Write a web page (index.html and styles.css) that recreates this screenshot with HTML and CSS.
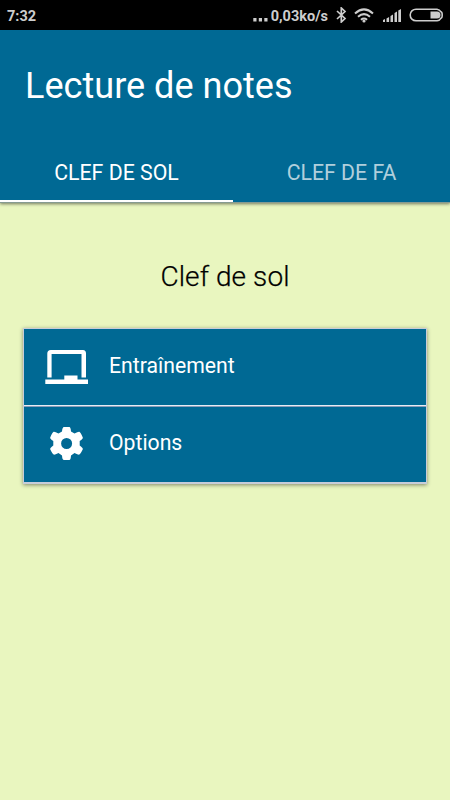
FILE: index.html
```html
<!DOCTYPE html>
<html lang="fr">
<head>
<meta charset="utf-8">
<title>Lecture de notes</title>
<link rel="stylesheet" href="styles.css">
</head>
<body>
<div class="status">
  <span class="time">7:32</span>
  <div class="indicators">
    <svg class="dots" width="15" height="4" viewBox="0 0 15 4"><path d="M.3 0h3.200v3.400H.3zM5.800 0H9v3.400H5.800zM11.300 0h3.200v3.400h-3.200z"/></svg>
    <span class="speed">0,03ko/s</span>
    <svg class="bluetooth" width="11" height="16" viewBox="0 0 11 16"><path d="M1 4l8 7.500L5.300 15V1L9 4.500 1 12"/></svg>
    <svg class="wifi" width="20" height="15" viewBox="0 0 20 15"><path d="M1 5.400Q10-2.600 19 5.400M4 8.700q6-5.200 12 0M6.900 11.700q3.100-2.400 6.200 0"/><circle cx="10" cy="13" r="1.600"/></svg>
    <svg class="signal" width="20" height="14" viewBox="0 0 20 14"><path d="M1 13v-2l2-1v3zM4.500 13V9.500l2.600-1.500v5zM8.500 13V7L11 5.500V13zM12.500 13V4L15 2.500V13zM16.300 13V1.500L19 0v13z"/></svg>
    <svg class="battery" width="35" height="14" viewBox="0 0 35 14"><path class="shell" d="M7 1.200h21a5 5 0 0 1 3.800 2.500q1.400 0 1.400 3.300t-1.400 3.300A5 5 0 0 1 28 12.800H7A5.800 5.800 0 0 1 7 1.200z"/><path d="M21.500 3.500H28a3.500 3.500 0 0 1 0 7h-6.500z"/></svg>
  </div>
</div>
<header class="header">
  <h1>Lecture de notes</h1>
  <nav class="tabs">
    <div class="tab active"><span>CLEF DE SOL</span></div>
    <div class="tab"><span>CLEF DE FA</span></div>
  </nav>
</header>
<main>
  <h2>Clef de sol</h2>
  <div class="menu">
    <div class="row">
      <svg class="icon" width="44" height="36" viewBox="0 0 44 36"><path d="M2.300 28.500V4.500Q2.300 1 5.800 1H38Q41 1 41 4.500v24H36.500V5H6.600v23.500zM.3 30.500H19.300V26.500H32.500v4H43v4.500H.3z"/></svg>
      <span>Entraînement</span>
    </div>
    <div class="row">
      <svg class="icon" width="44" height="36" viewBox="0 0 44 36"><path fill-rule="evenodd" d="M17 5.500Q17.300 1 19 1h5.300q1.400 0 1.700 4.500l3.500 2q3.700-2 4.800-1.700 1.100.4 3.500 5.600.4 1.200-3.100 3.700v4.500q3.500 2.500 3.100 3.700-2.300 5-3.500 5.300-1.100.3-4.800-1.500L26 29.400Q25.700 34 24.300 34H19q-1.700 0-2-4.600l-3.500-2.300q-3.700 1.800-4.800 1.500-1.200-.3-3.500-5.300-.4-1.200 3.100-3.700v-4.500q-3.500-2.500-3.100-3.700 2.400-5.200 3.500-5.600 1.100-.3 4.800 1.700zM21.600 12a5.500 5.500 0 1 0 0 11 5.500 5.500 0 0 0 0-11z"/></svg>
      <span>Options</span>
    </div>
  </div>
</main>
</body>
</html>
```
FILE: styles.css
```css
* { box-sizing: border-box; }
body {
  margin: 0;
  height: 800px;
  overflow: hidden;
  background: #e9f6bf;
  font-family: Roboto, "Liberation Sans", sans-serif;
}
.status {
  display: flex;
  align-items: center;
  justify-content: space-between;
  height: 30px;
  padding: 1px 6px 0 7px;
  background: #000;
  color: #cdcdcd;
  font-size: 14.5px;
  font-weight: 700;
  line-height: 30px;
}
.status svg { fill: #cdcdcd; }
.time { padding-top: 2px; }
.indicators { display: flex; align-items: center; }
.speed { padding-top: 2px; }
.dots { margin: 8px 3px 0 0; }
.bluetooth { margin: 0 0 2px 8px; }
.status .bluetooth { fill: none; stroke: #cdcdcd; stroke-width: 1.7; }
.wifi { margin: 0 0 1px 7px; overflow: visible; stroke: #cdcdcd; stroke-width: 2; }
.wifi path { fill: none; }
.wifi circle { stroke: none; }
.signal { margin-left: 8px; }
.battery { margin: 0 0 2px 7px; }
.battery .shell { fill: none; stroke: #cdcdcd; stroke-width: 1.6; }
.header {
  height: 173px;
  background: #006994;
  color: #fff;
  border-bottom: 1px solid #869b91;
  box-shadow: 0 1px 3px rgba(0, 0, 0, .5);
}
h1 {
  margin: 0;
  height: 112px;
  padding-left: 25px;
  font-size: 36.1px;
  font-weight: 400;
  line-height: 113px;
}
.tabs { display: flex; height: 60px; }
.tab {
  flex: 0 0 217px;
  display: flex;
  justify-content: center;
  height: 60px;
  border-bottom: 2px solid transparent;
  font-size: 21.3px;
  line-height: 61px;
  color: #b0cfdc;
}
.tab.active { flex-basis: 233px; color: #fff; border-color: #fff; }
main { padding: 0 23px; }
h2 {
  margin: 0;
  padding-top: 54px;
  height: 125px;
  text-align: center;
  font-size: 28px;
  font-weight: 300;
  line-height: 40px;
  letter-spacing: .1px;
  color: #000;
  -webkit-text-stroke: .25px #000;
}
.menu {
  border: 1px solid #c7cdd9;
  border-bottom-width: 2px;
  box-shadow: 0 1px 4px rgba(0, 0, 0, .45);
}
.row {
  display: flex;
  align-items: center;
  height: 78px;
  padding-left: 21px;
  background: #006994;
  color: #fff;
  font-size: 21.2px;
}
.row:first-child {
  border-bottom: 1px solid #8a9bb8;
  box-shadow: inset 0 -1px #e6edf5;
}
.row:last-child { height: 75px; }
.row span { padding-bottom: 4px; }
.icon { margin: 0 20px 1px 0; fill: #fff; }
```
